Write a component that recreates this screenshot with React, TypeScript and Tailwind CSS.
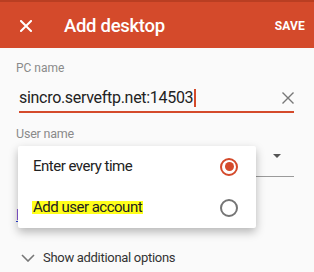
import React from 'react';

const App: React.FC = () => {
    return (
        <div className="relative w-[314px] h-[272px] overflow-hidden bg-[#fafafa] font-['Roboto',sans-serif]">
            {/* Toolbar */}
            <div className="h-12 bg-[#d44a2b] border-t-2 border-[#b93e22] flex items-center pl-5 pr-[9px] text-white">
                <svg width="12" height="12" viewBox="0 0 12 12" className="shrink-0 mt-[1px]">
                    <path d="M1 1L11 11M11 1L1 11" stroke="white" strokeWidth="2" strokeLinecap="square" />
                </svg>
                <h1 className="ml-8 mt-[2px] text-[18.5px] font-medium leading-none tracking-[-0.3px]">Add desktop</h1>
                <button className="ml-auto mt-[1px] text-[12px] font-bold tracking-[0.2px]">SAVE</button>
            </div>

            <div className="px-4 pt-3">
                <div className="text-[12px] leading-4 text-[#8a8a8a]">PC name</div>

                <div className="ml-[3px] mr-[4px] mt-[8px] h-[29px] flex items-center border-b-2 border-[#d44a2b]">
                    <span className="text-[16px] tracking-[-0.3px] text-[#222]">sincro.serveftp.net:14503</span>
                    <span className="ml-[1px] w-[2px] h-[18px] bg-[#d44a2b]"></span>
                    <svg width="12" height="12" viewBox="0 0 12 12" className="ml-auto">
                        <path d="M0.5 0.5L11.5 11.5M11.5 0.5L0.5 11.5" stroke="#777" strokeWidth="1.4" />
                    </svg>
                </div>

                <div className="mt-[13px] text-[12.5px] leading-4 tracking-[-0.2px] text-[#8a8a8a]">User name</div>

                <div className="ml-[3px] mr-[4px] h-[35px] flex items-center justify-end border-b border-[#9a9a9a]">
                    <svg width="8" height="4" viewBox="0 0 8 4" className="mr-[13px] mt-[-6px]">
                        <path d="M0 0H8L4 4Z" fill="#555" />
                    </svg>
                </div>

                <div className="mt-[30px] text-[14px] leading-4 text-[#2a3fd6] underline">How to find the PC name?</div>

                <div className="mt-[25px] ml-[5px] flex items-center gap-[8px]">
                    <svg width="14" height="8" viewBox="0 0 14 8">
                        <path d="M1 1L7 7L13 1" stroke="#777" strokeWidth="1.6" fill="none" />
                    </svg>
                    <span className="text-[13px] tracking-[-0.3px] text-[#333]">Show additional options</span>
                </div>
            </div>

            {/* Popup menu */}
            <div className="absolute left-[18px] top-[146px] w-[238px] h-[82px] bg-white rounded-[2px] shadow-[0_4px_10px_rgba(0,0,0,0.28)] flex flex-col">
                <div className="flex-1 flex items-center justify-between pl-[15px] pr-[18px]">
                    <span className="text-[15px] tracking-[-0.5px] text-[#222]">Enter every time</span>
                    <span className="w-[18px] h-[18px] rounded-full border-2 border-[#d44a2b] flex items-center justify-center">
                        <span className="w-[9px] h-[9px] rounded-full bg-[#d44a2b]"></span>
                    </span>
                </div>
                <div className="flex-1 flex items-center justify-between pl-[14px] pr-[18px]">
                    <span className="text-[15px] leading-[13px] tracking-[-0.5px] text-[#222] bg-[#ffff1a] px-[1px]">Add user account</span>
                    <span className="w-[18px] h-[18px] rounded-full border-2 border-[#757575]"></span>
                </div>
            </div>
        </div>
    );
};

export default App;
